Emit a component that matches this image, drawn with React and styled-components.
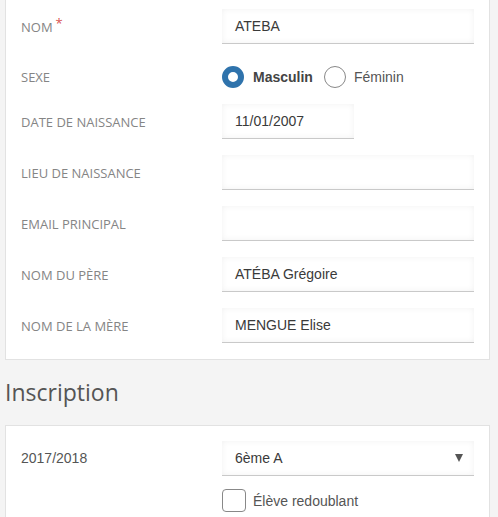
import styled, { createGlobalStyle } from 'styled-components';

const GlobalStyle = createGlobalStyle`
  html, body {
    margin: 0;
    padding: 0;
    background: #f4f4f4;
  }
  body {
    font-family: 'Liberation Sans', Arial, sans-serif;
    color: #444;
  }
`;

const Page = styled.div`
  padding: 0 8px 0 5px;
  overflow: hidden;
  height: 517px;
`;

const Card = styled.div`
  background: #fff;
  border: 1px solid #e2e2e2;
  border-top: ${({ cut }) => (cut ? 'none' : '1px solid #e2e2e2')};
  padding: ${({ cut }) => (cut ? '9px 15px 16px' : '15px 15px 15px')};
  display: flex;
  flex-direction: column;
  gap: 16px;
`;

const Row = styled.div`
  display: grid;
  grid-template-columns: 201px 1fr;
  align-items: ${({ top }) => (top ? 'start' : 'center')};
  min-height: ${({ short }) => (short ? '28px' : '35px')};
  padding-top: ${({ short }) => (short ? '6px' : '0')};
  box-sizing: border-box;
`;

const Label = styled.div`
  font-family: 'Open Sans', sans-serif;
  font-size: 13px;
  text-transform: uppercase;
  color: #858585;
  display: flex;
  align-items: flex-start;
`;

const PlainLabel = styled.div`
  font-size: 14px;
  color: #555;
  line-height: 35px;
`;

const Required = styled.span`
  color: #d9534f;
  font-size: 13px;
  margin-left: 3px;
  margin-top: -4px;
`;

const Input = styled.div`
  height: 35px;
  box-sizing: border-box;
  width: ${({ narrow }) => (narrow ? '132px' : '100%')};
  background: #fff;
  border-bottom: 1px solid #c9c9c9;
  box-shadow: inset 0 0 6px rgba(0, 0, 0, 0.06);
  padding: 0 12px 0 13px;
  display: flex;
  align-items: center;
  justify-content: space-between;
  font-size: 14px;
  color: #3a3a3a;
`;

const Arrow = styled.span`
  width: 0;
  height: 0;
  border-left: 4px solid transparent;
  border-right: 4px solid transparent;
  border-top: 8px solid #555;
  margin-right: -1px;
`;

const Radios = styled.div`
  display: flex;
  align-items: center;
`;

const Radio = styled.span`
  width: 22px;
  height: 22px;
  box-sizing: border-box;
  border-radius: 50%;
  border: ${({ checked }) => (checked ? '6px solid #2f73ac' : '1px solid #888')};
  background: #fff;
  margin-right: ${({ checked }) => (checked ? '9px' : '8px')};
`;

const RadioText = styled.span`
  font-size: 14px;
  font-weight: ${({ checked }) => (checked ? 700 : 400)};
  color: ${({ checked }) => (checked ? '#444' : '#555')};
  margin-right: ${({ checked }) => (checked ? '11px' : '0')};
`;

const Heading = styled.h2`
  font-family: 'Open Sans', sans-serif;
  font-weight: 400;
  font-size: 23px;
  line-height: 26px;
  color: #555;
  margin: 19px 0 20px;
`;

const Stack = styled.div`
  display: flex;
  flex-direction: column;
  gap: 13px;
`;

const CheckRow = styled.label`
  display: flex;
  align-items: center;
  font-size: 14px;
  color: #555;
`;

const Box = styled.span`
  width: 24px;
  height: 23px;
  box-sizing: border-box;
  border: 1px solid #888;
  border-radius: 4px;
  margin-right: 7px;
  background: #fff;
`;

const fields = [
  { label: 'Lieu de naissance', value: '' },
  { label: 'Email principal', value: '' },
  { label: 'Nom du père', value: 'ATÉBA Grégoire' },
  { label: 'Nom de la mère', value: 'MENGUE Elise' },
];

export default function App() {
  return (
    <Page>
      <GlobalStyle />
      <Card cut>
        <Row>
          <Label>
            Nom<Required>*</Required>
          </Label>
          <Input>ATEBA</Input>
        </Row>
        <Row short>
          <Label>Sexe</Label>
          <Radios>
            <Radio checked />
            <RadioText checked>Masculin</RadioText>
            <Radio />
            <RadioText>Féminin</RadioText>
          </Radios>
        </Row>
        <Row>
          <Label>Date de naissance</Label>
          <Input narrow>11/01/2007</Input>
        </Row>
        {fields.map((f) => (
          <Row key={f.label}>
            <Label>{f.label}</Label>
            <Input>{f.value}</Input>
          </Row>
        ))}
      </Card>
      <Heading>Inscription</Heading>
      <Card>
        <Row top>
          <PlainLabel>2017/2018</PlainLabel>
          <Stack>
            <Input>
              6ème A
              <Arrow />
            </Input>
            <CheckRow>
              <Box />
              Élève redoublant
            </CheckRow>
          </Stack>
        </Row>
      </Card>
    </Page>
  );
}
